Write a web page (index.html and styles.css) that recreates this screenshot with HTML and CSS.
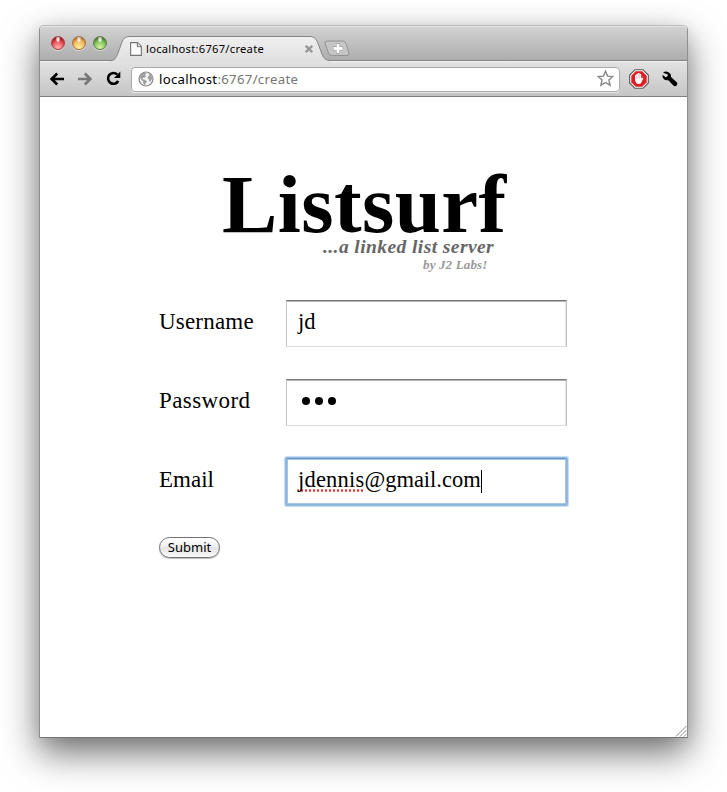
FILE: index.html
```
<!DOCTYPE html>
<html lang="en">
<head>
<meta charset="utf-8">
<title>localhost:6767/create</title>
<link rel="stylesheet" href="styles.css">
</head>
<body>
<div class="window">
  <header class="tabstrip">
    <div class="lights"><i class="light red"></i><i class="light amber"></i><i class="light green"></i></div>
    <div class="tab">
      <svg class="tab-shape" width="220" height="26" viewBox="0 0 220 26">
        <defs><linearGradient id="tabfill" x1="0" y1="0" x2="0" y2="1"><stop offset="0" stop-color="#f0f0f0"/><stop offset="1" stop-color="#dfdfdf"/></linearGradient></defs>
        <path d="M0 26V24.5C5 24.5 6 22 8 17L12 6Q14 .5 19 .5H201Q205 .5 207 5L212 18Q214 24.5 220 24.5V26Z" fill="url(#tabfill)"/>
        <path d="M0 24.5C5 24.5 6 22 8 17L12 6Q14 .5 19 .5H201Q205 .5 207 5L212 18Q214 24.5 220 24.5" fill="none" stroke="#858585"/>
      </svg>
      <svg class="page-icon" width="12" height="14" viewBox="0 0 12 14"><path d="M.6.6H7.5L11.4 4.5V13.4H.6Z" fill="#fafafa" stroke="#747474" stroke-width="1.1"/><path d="M7.3.8V4.7H11.2" fill="#ddd" stroke="#747474"/></svg>
      <span class="tab-title">localhost:6767/create</span>
      <svg class="close" width="8" height="8" viewBox="0 0 8 8"><path d="M.8.8L7.2 7.2M7.2.8L.8 7.2" stroke="#969696" stroke-width="2.300"/></svg>
    </div>
    <svg class="newtab" width="26" height="17" viewBox="0 0 26 17"><path d="M3 1H19Q21 1 22 3.500L25 13Q25.500 15.500 23 15.500H8Q5.500 15.500 4.500 13L1 3.500Q.500 1 3 1Z" fill="#c5c5c5" stroke="#929292"/><path d="M9 8.500H19M14 3.500V13.500" stroke="#999" stroke-width="4"/><path d="M9.500 8.500H18.500M14 4V13" stroke="#fff" stroke-width="2.800"/></svg>
  </header>
  <nav class="toolbar">
    <svg class="back" width="14" height="14" viewBox="0 0 14 14"><path d="M14 7H2M7.200 1.500L1.700 7L7.200 12.500" fill="none" stroke="#000" stroke-width="2.600"/></svg>
    <svg class="forward" width="14" height="14" viewBox="0 0 14 14"><path d="M0 7H12M6.800 1.500L12.300 7L6.800 12.500" fill="none" stroke="#777" stroke-width="2.600"/></svg>
    <svg class="reload" width="15" height="15" viewBox="0 0 15 15"><path d="M11.300 3.600A5.400 5.400 0 1 0 12.200 10" fill="none" stroke="#000" stroke-width="2.600"/><path d="M14.300.6V7H8Z"/></svg>
    <div class="address">
      <svg class="globe" width="16" height="16" viewBox="0 0 16 16"><circle cx="8" cy="8" r="7" fill="#f4f4f4" stroke="#888" stroke-width="1.200"/><path d="M2.500 4L5.500 1.800L8.500 2L7 4.200L8.300 5.400L6 7L5 6.500L4.500 8L7.500 9L9 10.500L7.500 12.500L7 14.300L5.500 13L5 10.500L2.500 8L1.500 6ZM10 2.200L13 4L14.300 7L13 10L11.500 11L11 8.500L9.700 7.500L10 5.500L11.500 4.600Z" fill="#a0a0a0"/></svg>
      <span class="url"><b>localhost</b>:6767/create</span>
      <svg class="star" width="17" height="17" viewBox="0 0 17 17"><path d="M8.500 1.300L10.600 6.100L15.800 6.500L11.900 10L13.100 15.200L8.500 12.500L3.900 15.200L5.100 10L1.200 6.500L6.400 6.100Z" fill="#fff" stroke="#858585" stroke-width="1.400"/></svg>
    </div>
    <svg class="stop" width="20" height="20" viewBox="0 0 20 20"><path d="M6 .7H14L19.300 6V14L14 19.300H6L.7 14V6Z" fill="#fff" stroke="#555" stroke-width="1.100"/><path d="M6.700 2.300H13.300L17.700 6.700V13.300L13.300 17.700H6.700L2.300 13.300V6.700Z" fill="#dc2023"/><path d="M6 10V6.500Q6.700 5.700 7.300 6.500V5Q8.200 4.200 8.900 5V4.300Q9.800 3.600 10.600 4.300V5Q11.500 4.500 12.200 5.300V9.500L13.700 8.500Q14.600 8.700 14.200 9.600L12.300 13.500Q11.500 15 9.700 15Q6.200 15 6 10Z" fill="#fff"/><path d="M7.500 6V9.500M9.100 5V9.500M10.700 5V9.500" stroke="#e6a1a1" stroke-width=".5"/></svg>
    <svg class="wrench" width="16" height="16" viewBox="0 0 16 16"><path d="M1.500 1.200Q3.500 0 6.500 1.200Q9.500 3 9 6L15 11.400Q16 13 14.700 14.500Q13.200 15.800 11.700 14.700L6.300 9.300Q3 9.700 1.300 7.500Q.2 6 .6 3.800L3.500 6.200L5.700 5.300L5.600 3.300L1.500 2Z"/></svg>
  </nav>
  <main class="page">
    <div class="brand">
      <h1>Listsurf</h1>
      <p class="tagline">...a linked list server</p>
      <p class="byline">by J2 Labs!</p>
    </div>
    <form class="form">
      <div class="row"><label class="username">Username</label><div class="field">jd</div></div>
      <div class="row"><label class="password">Password</label><div class="field"><span class="dots"><i></i><i></i><i></i></span></div></div>
      <div class="row"><label>Email</label><div class="field focus"><span class="misspelled">jdennis</span>@gmail.com<i class="caret"></i></div></div>
      <button class="submit" type="button">Submit</button>
    </form>
    <svg class="grip" width="12" height="12" viewBox="0 0 12 12"><path d="M1 11.500L11.500 1M5 11.500L11.500 5M9 11.500L11.500 9" stroke="#888" stroke-width="1"/></svg>
  </main>
</div>
</body>
</html>
```
FILE: styles.css
```
* { box-sizing: border-box; }
body { margin: 0; height: 792px; padding: 25px 39px 0; background: #fff; overflow: hidden; }
svg { display: block; flex: none; }
.window { width: 649px; height: 713px; display: flex; flex-direction: column; border: 1px solid #8e8e8e; border-top-color: #bbb; border-bottom-color: #757575; border-radius: 5px 5px 0 0; background: #fff; box-shadow: 0 15px 36px rgba(0,0,0,.56), 0 3px 16px rgba(0,0,0,.08); }
.tabstrip { height: 35px; display: flex; align-items: flex-start; padding-left: 11px; background: linear-gradient(#d2d2d2, #adadad); border-top: 1px solid #e4e4e4; border-bottom: 1px solid #858585; border-radius: 4px 4px 0 0; }
.lights { display: flex; gap: 7px; margin-top: 9px; width: 58px; }
.light { width: 14px; height: 14px; border-radius: 50%; border: 1px solid; box-shadow: 0 1px 0 rgba(255,255,255,.45), inset 0 2px 2px rgba(60,0,0,.25); }
.red { border-color: #a24544; background: radial-gradient(ellipse at 50% 15%, #fff 0 12%, transparent 28%), radial-gradient(circle at 50% 90%, #ffb8b7, #e2383e 65%, #a91722); }
.amber { border-color: #a57643; background: radial-gradient(ellipse at 50% 15%, #fff 0 12%, transparent 28%), radial-gradient(circle at 50% 90%, #fff09d, #eeb052 65%, #b86d25); }
.green { border-color: #5a8145; background: radial-gradient(ellipse at 50% 15%, #fff 0 12%, transparent 28%), radial-gradient(circle at 50% 90%, #d8f5a5, #70b84d 65%, #357529); }
.tab { position: relative; width: 220px; height: 26px; margin: 9px 0 0 1px; display: flex; align-items: center; padding-left: 20px; font: 11.200px/14px "Noto Sans", sans-serif; color: #000; }
.tab-shape { position: absolute; left: 0; top: 0; }
.page-icon, .tab-title, .close { position: relative; }
.tab-title { margin-left: 4px; width: 120px; white-space: nowrap; letter-spacing: .25px; }
.close { margin-left: 39px; }
.newtab { margin: 13px 0 0 -6px; position: relative; }
.toolbar { height: 36px; display: flex; align-items: center; padding-left: 10px; background: linear-gradient(#e2e2e2, #c5c5c5); border-top: 1px solid #f1f1f1; border-bottom: 1px solid #7e7e7e; }
.back, .forward, .reload { margin-top: -1px; }
.forward { margin-left: 14px; }
.reload { margin-left: 14px; }
.address { width: 489px; height: 25px; margin-left: 10px; padding: 0 5px 1px 6px; display: flex; align-items: center; border: 1px solid #aaa; border-radius: 4px; background: #fff; box-shadow: 0 1px 0 #e8e8e8; }
.url { margin-left: 5px; font: 13.200px/18px "Noto Sans", sans-serif; letter-spacing: .3px; color: #757575; flex: 1; white-space: nowrap; }
.url b { font-weight: 400; color: #000; }
.stop { margin-left: 9px; }
.wrench { margin-left: 13px; }
.page { flex: 1; position: relative; padding: 65px 119px 0; font-family: "Liberation Serif", serif; color: #000; }
.brand { height: 138px; }
h1 { margin: 0; padding-left: 63px; font-size: 83px; line-height: 84px; letter-spacing: .4px; font-weight: bold; white-space: nowrap; }
.tagline, .byline { margin: 0; font-style: italic; font-weight: bold; white-space: nowrap; }
.tagline { margin-top: -10px; padding-left: 164px; font-size: 19.500px; line-height: 22px; letter-spacing: .42px; color: #666; }
.byline { margin-top: -1px; padding-left: 264px; font-size: 13px; line-height: 15px; letter-spacing: .15px; color: #999; }
.form { margin: 0; }
.row { display: flex; height: 47px; margin-bottom: 32px; }
label { width: 127px; padding-top: 8px; font-size: 23px; line-height: 28px; white-space: nowrap; }
.username { letter-spacing: .2px; }
.password { letter-spacing: .4px; }
.field { width: 281px; height: 47px; padding: 7px 0 0 11px; display: flex; font-size: 22.500px; line-height: 27px; border: 1px solid #c3c3c3; border-top-color: #777; border-bottom-color: #ddd; box-shadow: inset 0 1px 0 #b5b5b5, inset -1px 0 0 #e4e4e4; }
.focus { border-color: #8bb3dc; border-top-color: #6f97c4; border-radius: 1px; box-shadow: 0 0 0 1px #92badf, 0 0 1px 2px #c5dcf2, inset 0 0 0 1px #a3c6e8; }
.misspelled { height: 26px; letter-spacing: .2px; background: radial-gradient(circle, #f22e35 0 1px, transparent 1.400px) 2px 100% / 4px 3px repeat-x; }
.caret { width: 1px; height: 23px; margin-top: 4px; background: #000; }
.dots { display: flex; gap: 5px; padding: 10px 0 0 4px; }
.dots i { width: 8px; height: 8px; border-radius: 50%; background: #000; }
.submit { display: block; width: 61px; height: 21px; padding: 0 0 1px; border: 1px solid #717171; border-radius: 10.500px; background: linear-gradient(#fff, #f0f0f0 45%, #e3e3e3 50%, #fafafa); box-shadow: 0 1px 1px rgba(0,0,0,.25); font: 13px/17px "Noto Sans", sans-serif; color: #000; }
.grip { position: absolute; right: 0; bottom: 0; }
```
